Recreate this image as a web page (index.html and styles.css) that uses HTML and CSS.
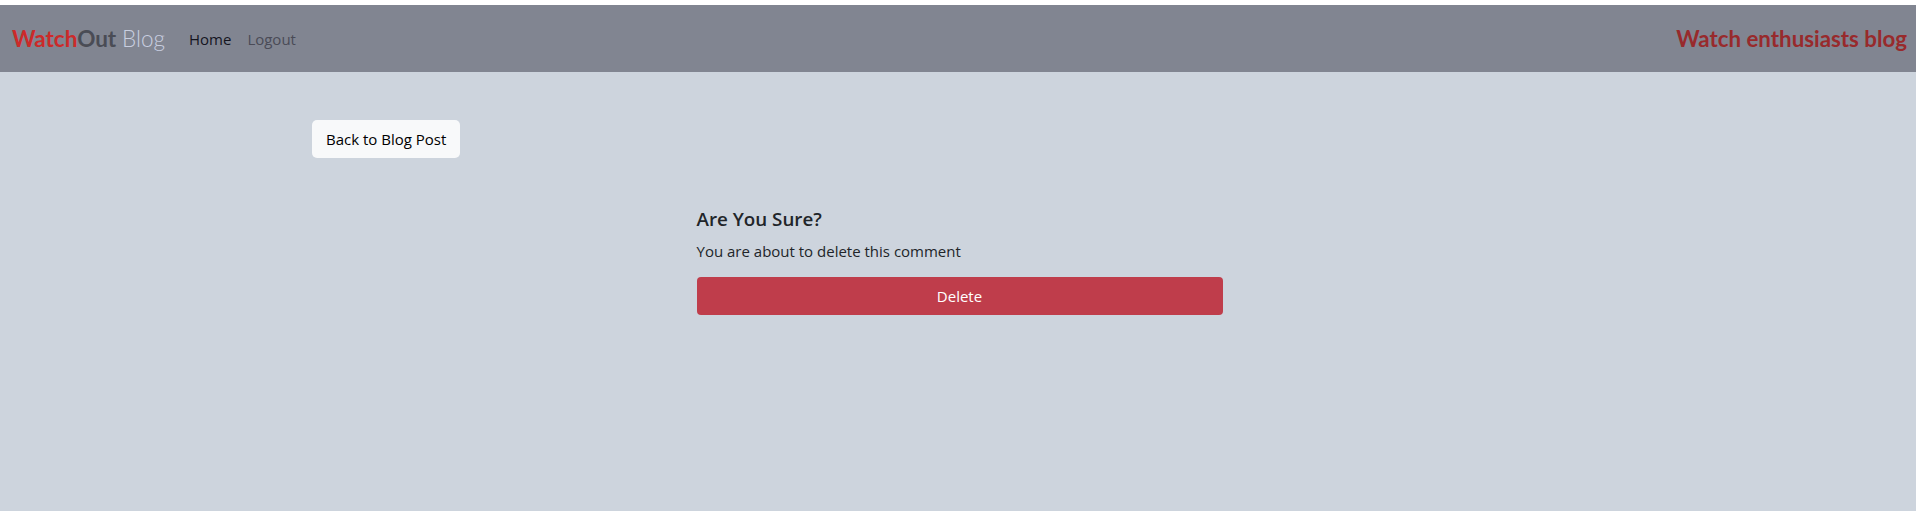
FILE: index.html
```html
<!DOCTYPE html>
<html lang="en">
<head>
<meta charset="utf-8">
<title>WatchOut Blog</title>
<link rel="stylesheet" href="styles.css">
</head>
<body>
<div class="topstrip"></div>
<nav class="navbar">
  <div class="nav-left">
    <a class="brand" href="#"><span class="brand-watch">Watch</span><span class="brand-out">Out</span> <span class="brand-blog">Blog</span></a>
    <ul class="nav-links">
      <li><a class="nav-link active" href="#">Home</a></li>
      <li><a class="nav-link" href="#">Logout</a></li>
    </ul>
  </div>
  <div class="tagline">Watch enthusiasts blog</div>
</nav>
<main class="container">
  <div class="back-row">
    <a class="btn-light" href="#">Back to Blog Post</a>
  </div>
  <div class="confirm-row">
    <div class="confirm">
      <h5 class="confirm-title">Are You Sure?</h5>
      <p class="confirm-text">You are about to delete this comment</p>
      <button class="btn-danger" type="button">Delete</button>
    </div>
  </div>
</main>
</body>
</html>
```
FILE: styles.css
```css
* { box-sizing: border-box; }
html, body { margin: 0; padding: 0; }
body {
  background: #cdd4dd;
  font-family: "Open Sans", "Noto Sans", sans-serif;
  color: #212529;
  height: 511px;
  overflow: hidden;
}
.topstrip { height: 5px; background: #ffffff; }
.navbar {
  height: 67px;
  background: #818591;
  display: flex;
  align-items: center;
  justify-content: space-between;
  padding: 0 9px 0 12px;
}
.nav-left { display: flex; align-items: center; }
.brand {
  font-family: "Lato", sans-serif;
  font-size: 22.5px;
  text-decoration: none;
  margin-right: 24px;
  white-space: nowrap;
}
.brand-watch { color: #cc2a2a; font-weight: 700; }
.brand-out { color: #4a4c55; font-weight: 700; }
.brand-blog { color: #c9cfe0; font-weight: 300; }
.nav-links { list-style: none; margin: 0; padding: 0; display: flex; gap: 16px; }
.nav-link {
  font-size: 15px;
  text-decoration: none;
  color: #4a4b57;
}
.nav-link.active { color: #15151f; }
.tagline {
  font-family: "Lato", sans-serif;
  font-weight: 700;
  font-size: 22.3px;
  color: #982a2c;
}
.container { max-width: 1296px; margin: 0 auto; }
.back-row { padding-top: 48px; padding-left: 2px; }
.btn-light {
  display: inline-block;
  height: 38px;
  line-height: 38px;
  padding: 0 14px;
  background: #f8f9fa;
  color: #000;
  border-radius: 5px;
  font-size: 15px;
  text-decoration: none;
}
.confirm-row { display: flex; justify-content: center; padding-top: 49px; padding-left: 3px; }
.confirm { width: 526px; }
.confirm-title {
  margin: 0 0 8px;
  font-size: 18.8px;
  font-weight: 600;
  line-height: 24px;
  color: #212529;
}
.confirm-text {
  margin: 0 0 14px;
  font-size: 15px;
  line-height: 24px;
  color: #212529;
}
.btn-danger {
  display: block;
  width: 100%;
  height: 38px;
  border: 0;
  border-radius: 4px;
  background: #bf3d4b;
  color: #fff;
  font-family: "Open Sans", "Noto Sans", sans-serif;
  font-size: 15px;
}
```
